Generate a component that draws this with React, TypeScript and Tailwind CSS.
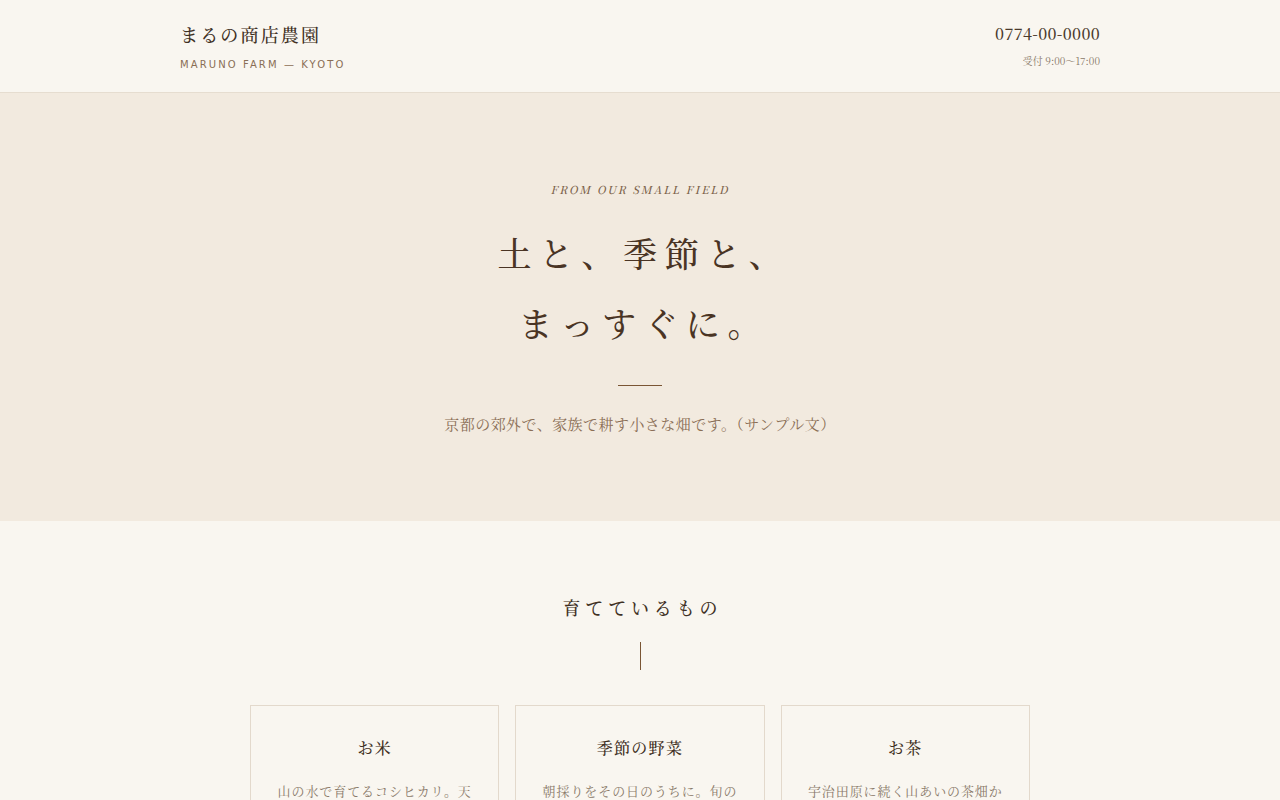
import React from "react";

const serif = { fontFamily: '"Noto Serif CJK JP", "Noto Serif JP", "Liberation Serif", "Noto Sans CJK JP", serif' };

export default function App() {
  return (
    <div className="min-h-[800px] bg-[#f9f6f0] text-[#4a3a2c]" style={serif}>
      <header className="border-b border-[#e6ddd0]">
        <div className="mx-auto flex h-[92px] w-[920px] items-center justify-between">
          <div className="pt-[3px]">
            <div className="text-[18px] font-medium leading-none tracking-[0.12em] text-[#3f3024]">まるの商店農園</div>
            <div className="mt-[17px] text-[10px] leading-none tracking-[0.21em] text-[#8a6e55]" style={{ fontFamily: '"DejaVu Sans", "Liberation Sans", sans-serif' }}>MARUNO FARM — KYOTO</div>
          </div>
          <div className="text-right">
            <div className="text-[16px] font-medium leading-none tracking-[0.02em] text-[#4a3a2c]">0774-00-0000</div>
            <div className="mt-[14px] text-[10px] leading-none text-[#8a7a6a]">受付 9:00〜17:00</div>
          </div>
        </div>
      </header>

      <section className="flex h-[428px] flex-col items-center bg-[#f2eadf] pt-[91px]">
        <div className="text-[11px] font-medium italic leading-none tracking-[0.18em] text-[#7a5f48]">FROM OUR SMALL FIELD</div>
        <h1 className="mt-[23px] text-center text-[34px] font-medium leading-[70px] tracking-[0.23em] text-[#4a3424]">
          <div className="pl-[0.23em]">土と、季節と、</div>
          <div className="pl-[0.23em]">まっすぐに。</div>
        </h1>
        <div className="mt-[27px] h-px w-[44px] bg-[#7a5534]" />
        <p className="mt-[30px] text-[15px] leading-none tracking-[0.03em] text-[#8a6e55]">京都の郊外で、家族で耕す小さな畑です。（サンプル文）</p>
      </section>

      <section className="flex flex-col items-center pt-[77px]">
        <h2 className="pl-[0.27em] text-[18px] font-medium leading-none tracking-[0.27em] text-[#3f3024]">育てているもの</h2>
        <div className="mt-[26px] h-[28px] w-px bg-[#7a5534]" />
        <div className="mt-[35px] grid w-[780px] grid-cols-3 gap-[16px]">
          {[
            { t: "お米", d: "山の水で育てるコシヒカリ。天" },
            { t: "季節の野菜", d: "朝採りをその日のうちに。旬の" },
            { t: "お茶", d: "宇治田原に続く山あいの茶畑か" },
          ].map((c) => (
            <div key={c.t} className="h-[140px] border border-[#e3d9cc] px-[20px] pt-[34px] text-center">
              <div className="text-[16px] font-medium leading-none tracking-[0.08em] text-[#3f3024]">{c.t}</div>
              <div className="mt-[23px] overflow-hidden whitespace-nowrap text-[13px] leading-[24px] tracking-[0.07em] text-[#8a7a6a]">{c.d}</div>
            </div>
          ))}
        </div>
      </section>
    </div>
  );
}
